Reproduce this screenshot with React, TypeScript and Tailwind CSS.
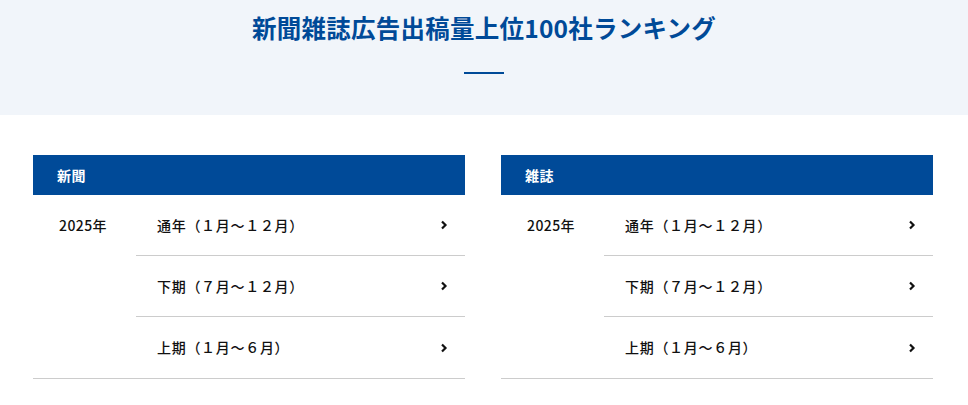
const sections = [
  { name: "新聞", year: "2025年", items: ["通年（１月〜１２月）", "下期（７月〜１２月）", "上期（１月〜６月）"] },
  { name: "雑誌", year: "2025年", items: ["通年（１月〜１２月）", "下期（７月〜１２月）", "上期（１月〜６月）"] },
];

function Chevron() {
  return (
    <svg width="8" height="10" viewBox="0 0 8 10" className="shrink-0">
      <path d="M2 1.5 L5.5 5 L2 8.5" fill="none" stroke="#111" strokeWidth="2.2" />
    </svg>
  );
}

function Panel({ section }: { section: (typeof sections)[number] }) {
  return (
    <div>
      <div className="flex h-10 items-center bg-[#004a98] pl-[24px] text-[14px] font-bold tracking-[0.04em] text-white">{section.name}</div>
      <div className="flex border-b border-[#cccccc]">
        <div className="w-[103px] shrink-0 pl-[26px] pt-[20px] text-[14px] font-medium tracking-[0.03em] text-[#111]">{section.year}</div>
        <ul className="flex-1">
          {section.items.map((item, i) => (
            <li
              key={item}
              className={`flex h-[61px] items-center justify-between pl-[21px] pr-[17px] text-[14px] font-medium tracking-[0.05em] text-[#111] ${
                i < section.items.length - 1 ? "border-b border-[#cccccc]" : ""
              }`}
            >
              <span>{item}</span>
              <Chevron />
            </li>
          ))}
        </ul>
      </div>
    </div>
  );
}

export default function App() {
  return (
    <div className="min-h-[405px] bg-white font-['Noto_Sans_CJK_JP',sans-serif]">
      <div className="flex h-[115px] flex-col items-center bg-[#f1f5fa] pt-[12px]">
        <h1 className="text-[24.5px] font-bold leading-[32px] tracking-[0.01em] text-[#004a98]">新聞雑誌広告出稿量上位100社ランキング</h1>
        <div className="mt-[28px] h-[2px] w-10 bg-[#004a98]" />
      </div>
      <div className="ml-[33px] mt-10 grid w-[900px] grid-cols-2 gap-9">
        {sections.map(s => (
          <Panel key={s.name} section={s} />
        ))}
      </div>
    </div>
  );
}
